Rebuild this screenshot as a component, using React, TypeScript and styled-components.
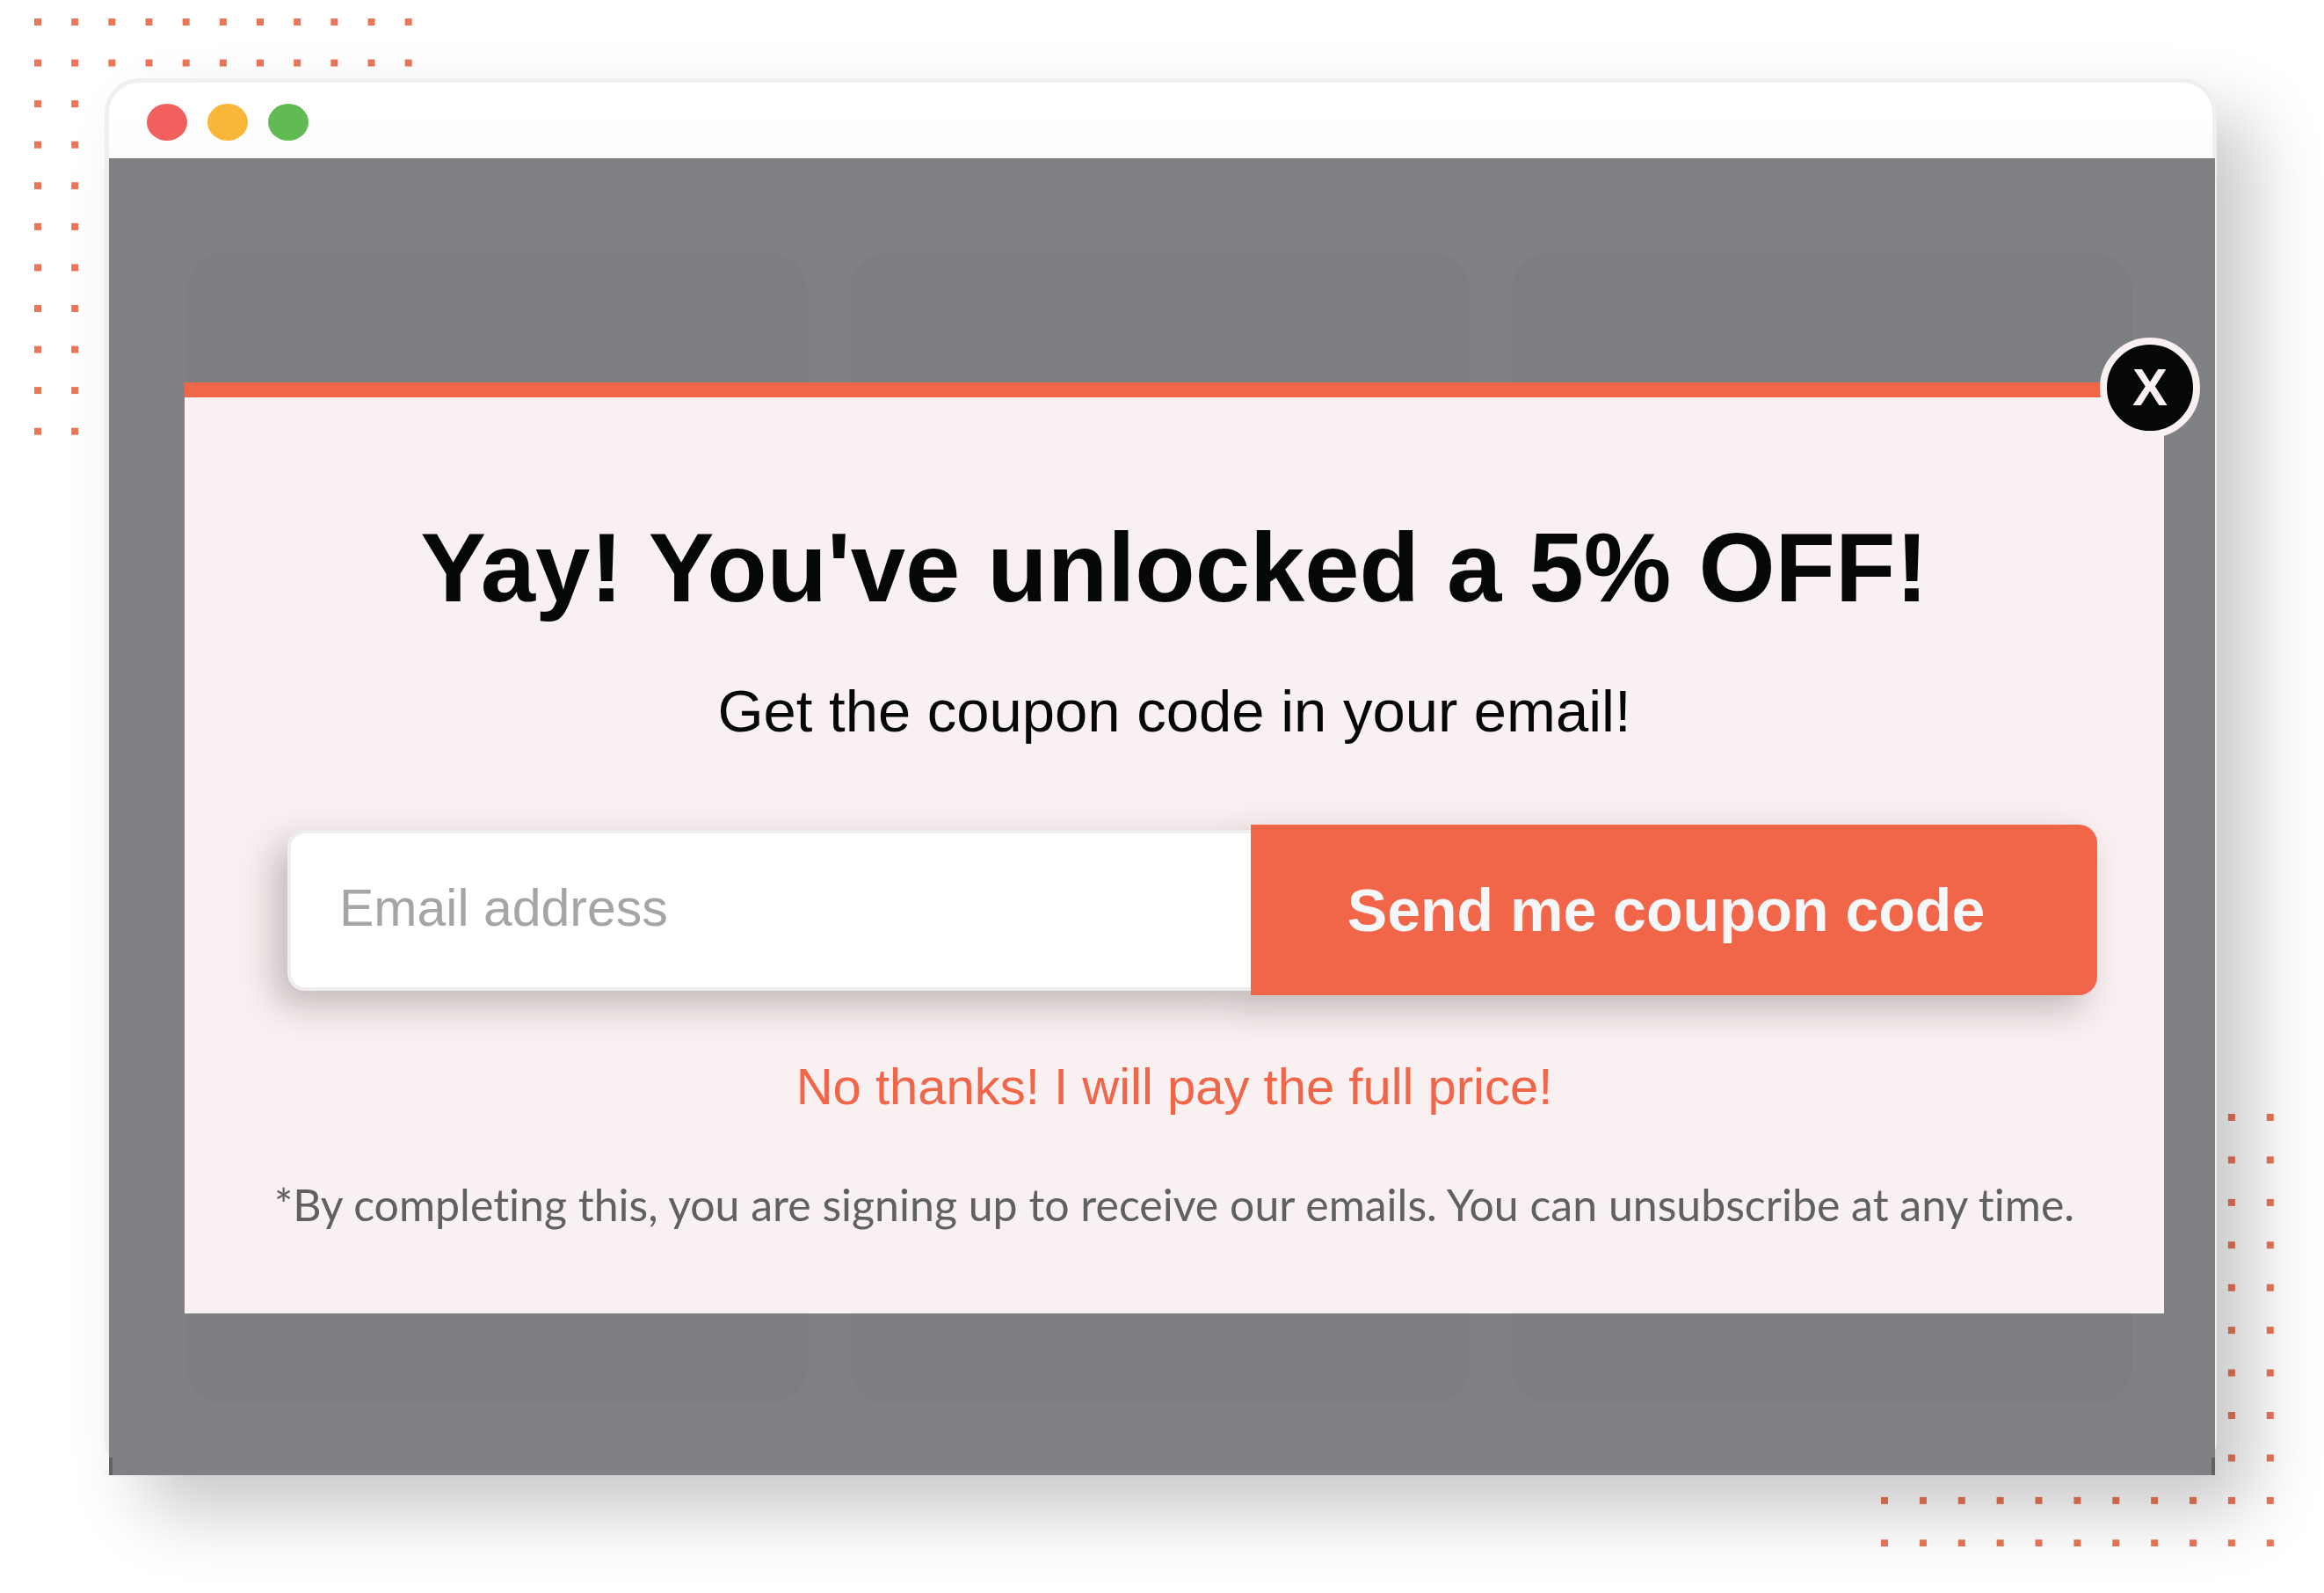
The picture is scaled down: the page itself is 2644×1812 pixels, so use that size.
import React, { useState } from "react";
import styled, { createGlobalStyle } from "styled-components";

const sans = `"Liberation Sans", Arial, Helvetica, sans-serif`;
const coral = "#f16549";
const blush = "#f9f0f1";
const ink = "#050709";

const GlobalStyle = createGlobalStyle`
  *, *::before, *::after { box-sizing: border-box; }
  body { margin: 0; background: #fff; font-family: ${sans}; }
`;

const Page = styled.div`
  position: relative;
  min-height: 100vh;
  padding: 89px 122px 134px 119px;
  overflow: hidden;
`;

const DotField = styled.svg<{ $corner: "start" | "end" }>`
  position: absolute;
  fill: #eb7658;
  ${(p) => (p.$corner === "start" ? "left: 39px; top: 21px;" : "right: 57px; bottom: 53px;")}
`;

const BrowserWindow = styled.main`
  position: relative;
  border: 5px solid #f1eeee;
  border-radius: 40px;
  background: #fff;
  box-shadow: 42px 42px 80px rgba(0, 0, 0, 0.215);
`;

const TitleBar = styled.header`
  display: flex;
  gap: 23px;
  padding: 24px 43px 20px;
  border-radius: 35px 35px 0 0;
  background: linear-gradient(#fff 40%, #fcfcfc);
`;

const Light = styled.span<{ $color: string }>`
  width: 46px;
  height: 42px;
  border-radius: 50%;
  background: ${(p) => p.$color};
`;

const Backdrop = styled.div`
  position: relative;
  display: grid;
  margin: 0 -3px -5px 0;
  background: #808184;

  &::before,
  &::after {
    content: "";
    position: absolute;
    bottom: 0;
    width: 4px;
    height: 20px;
    background: #626263;
  }
  &::before { left: 0; }
  &::after { right: 0; }
`;

const Cards = styled.div`
  grid-area: 1 / 1;
  display: grid;
  grid-template-columns: repeat(3, 1fr);
  gap: 48px;
  padding: 108px 94px 82px 89px;
`;

const Card = styled.div`
  border-radius: 42px;
  background: #7d7e81;
`;

const Modal = styled.section`
  grid-area: 1 / 1;
  position: relative;
  margin: 255px 58px 184px 86px;
  padding: 130px 0 92px;
  border-top: 17px solid ${coral};
  background: ${blush};
  text-align: center;
`;

const CloseButton = styled.button`
  position: absolute;
  top: -68px;
  right: -41px;
  display: grid;
  place-items: center;
  width: 114px;
  height: 114px;
  padding: 0;
  border: 8px solid ${blush};
  border-radius: 50%;
  background: ${ink};
  color: ${blush};
  font: bold 60px/60px ${sans};
  cursor: pointer;
`;

const Title = styled.h1`
  margin: 0;
  color: ${ink};
  font-size: 112px;
  line-height: 128px;
`;

const Subtitle = styled.p`
  margin: 59px 0 0;
  color: ${ink};
  font-size: 67px;
  line-height: 80px;
`;

const Form = styled.form`
  display: grid;
  grid-template-columns: 1096fr 963fr;
  align-items: center;
  margin: 89px 76px 68px 117px;
  filter: drop-shadow(-14px 16px 20px rgba(40, 20, 25, 0.26));
`;

const EmailInput = styled.input`
  width: 100%;
  min-width: 0;
  height: 183px;
  padding: 0 55px 4px;
  border: 4px solid #eeeeed;
  border-right: 0;
  border-radius: 20px 0 0 20px;
  outline: 0;
  background: #fff;
  color: ${ink};
  font: 59px ${sans};
  &::placeholder { color: #a6a4a5; opacity: 1; }
`;

const SubmitButton = styled.button`
  height: 194px;
  padding: 0 18px 0 0;
  border: 0;
  border-radius: 0 21px 21px 0;
  background: ${coral};
  color: #f5f7f9;
  font: bold 68px ${sans};
  cursor: pointer;
`;

const Decline = styled.a`
  display: block;
  width: fit-content;
  margin: 0 auto;
  color: ${coral};
  font-size: 58px;
  line-height: 72px;
  text-decoration: none;
`;

const FinePrint = styled.p`
  margin: 66px 0 0;
  color: #606060;
  font-family: Lato, "Noto Sans", sans-serif;
  font-size: 50px;
  font-variant-ligatures: none;
  line-height: 64px;
`;

type DotsProps = { corner: "start" | "end"; stepX: number; stepY: number };

/* An L of small squares, two deep, hugging one corner of the page. */
function Dots({ corner, stepX, stepY }: DotsProps) {
  const squares: React.ReactElement[] = [];
  for (let row = 0; row < 11; row++) {
    for (let col = 0; col < 11; col++) {
      const shown = corner === "start" ? row < 2 || col < 2 : row > 8 || col > 8;
      if (shown) {
        squares.push(<rect key={`${row}-${col}`} x={col * stepX} y={row * stepY} width="8" height="8" />);
      }
    }
  }
  return (
    <DotField $corner={corner} width={stepX * 10 + 8} height={stepY * 10 + 8} aria-hidden="true">
      {squares}
    </DotField>
  );
}

export default function App() {
  const [email, setEmail] = useState("");
  return (
    <Page>
      <GlobalStyle />
      <Dots corner="start" stepX={42.17} stepY={46.57} />
      <Dots corner="end" stepX={43.88} stepY={48.43} />
      <BrowserWindow>
        <TitleBar>
          <Light $color="#f25f5f" />
          <Light $color="#f9b73a" />
          <Light $color="#5fbb52" />
        </TitleBar>
        <Backdrop>
          <Cards>
            <Card />
            <Card />
            <Card />
          </Cards>
          <Modal role="dialog" aria-labelledby="offer-title">
            <CloseButton type="button" aria-label="Close">X</CloseButton>
            <Title id="offer-title">Yay! You've unlocked a 5% OFF!</Title>
            <Subtitle>Get the coupon code in your email!</Subtitle>
            <Form onSubmit={(e) => e.preventDefault()}>
              <EmailInput
                type="email"
                aria-label="Email address"
                placeholder="Email address"
                value={email}
                onChange={(e) => setEmail(e.target.value)}
              />
              <SubmitButton type="submit">Send me coupon code</SubmitButton>
            </Form>
            <Decline href="#">No thanks! I will pay the full price!</Decline>
            <FinePrint>
              *By completing this, you are signing up to receive our emails. You can unsubscribe at any time.
            </FinePrint>
          </Modal>
        </Backdrop>
      </BrowserWindow>
    </Page>
  );
}
